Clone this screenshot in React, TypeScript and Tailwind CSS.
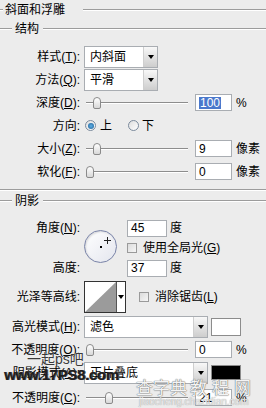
import type { ReactNode } from "react";

function Etched({ className = "" }: { className?: string }) {
  return <div className={`h-[2px] border-t border-[#9c9c9c] bg-white ${className}`} />;
}

function Label({ children }: { children: ReactNode }) {
  return <div className="w-[80px] shrink-0 text-right whitespace-nowrap leading-none">{children}</div>;
}

function Arrow() {
  return <div className="w-0 h-0 border-x-[3px] border-x-transparent border-t-[4px] border-t-black" />;
}

function Select({ value, className }: { value: string; className: string }) {
  return (
    <div className={`ml-[4px] flex h-[22px] border border-[#a9adb2] bg-white ${className}`}>
      <div className="flex-1 pl-[5px] flex items-center leading-none">{value}</div>
      <div className="w-[14px] flex items-center justify-center border-l border-[#cfcfcf] bg-linear-to-b from-[#f8f8f8] to-[#cdcdcd]">
        <Arrow />
      </div>
    </div>
  );
}

function Field({ value, selected, className = "" }: { value: string; selected?: boolean; className?: string }) {
  return (
    <div className={`w-[37px] h-[17px] border border-[#a9adb2] bg-white flex items-center pl-[3px] leading-none text-[12px] ${className}`}>
      {selected ? <span className="bg-[#4a78cc] text-white px-[1px]">{value}</span> : value}
    </div>
  );
}

function Slider({ pos }: { pos: number }) {
  return (
    <div className="relative w-[102px] h-[12px] ml-[6px] flex items-center">
      <div className="w-full h-[2px] border-t border-[#8d8d8d] bg-white" />
      <div
        className="absolute top-0 w-[8px] h-[12px] rounded-t-[4px] rounded-b-[2px] border border-[#8a8a8a] bg-linear-to-b from-white to-[#d8d8d8]"
        style={{ left: pos }}
      />
    </div>
  );
}

function Radio({ checked }: { checked?: boolean }) {
  return (
    <div className="w-[11px] h-[11px] rounded-full border border-[#7b8a9c] bg-linear-to-br from-[#dedede] to-white flex items-center justify-center">
      {checked && <div className="w-[6px] h-[6px] rounded-full bg-radial from-[#5fb0e6] to-[#1d5f96]" />}
    </div>
  );
}

function Check() {
  return <div className="w-[10px] h-[10px] border border-[#9a9a9a] bg-linear-to-br from-[#dcdcdc] to-[#f6f6f6]" />;
}

function SliderRow({ label, value, pos, unit, selected }: { label: ReactNode; value: string; pos: number; unit: string; selected?: boolean }) {
  return (
    <div className="flex items-center h-[23px]">
      <Label>{label}</Label>
      <Slider pos={pos} />
      <Field value={value} selected={selected} className="ml-[7px]" />
      <span className="ml-[4px] leading-none">{unit}</span>
    </div>
  );
}

export default function App() {
  return (
    <div className="relative w-[266px] h-[408px] overflow-hidden bg-[#ececec] text-[12px] text-black font-['Liberation_Sans','Noto_Sans_CJK_SC',sans-serif]">
      {/* 标题 */}
      <div className="flex items-center h-[19px]">
        <Etched className="w-[3px]" />
        <span className="ml-[2px] leading-none">斜面和浮雕</span>
        <Etched className="flex-1 ml-[18px]" />
      </div>

      {/* 结构 */}
      <div className="flex items-center h-[20px]">
        <Etched className="w-[12px]" />
        <span className="ml-[3px] leading-none">结构</span>
        <Etched className="flex-1 ml-[4px]" />
      </div>

      <div className="mt-[6px] flex items-center h-[23px]">
        <Label>样式(<u>T</u>):</Label>
        <Select value="内斜面" className="w-[74px]" />
      </div>
      <div className="flex items-center h-[23px]">
        <Label>方法(<u>Q</u>):</Label>
        <Select value="平滑" className="w-[74px]" />
      </div>
      <SliderRow label={<>深度(<u>D</u>):</>} value="100" pos={7} unit="%" selected />
      <div className="flex items-center h-[23px]">
        <Label>方向:</Label>
        <div className="ml-[5px]"><Radio checked /></div>
        <span className="ml-[4px] leading-none">上</span>
        <div className="ml-[16px]"><Radio /></div>
        <span className="ml-[3px] leading-none">下</span>
      </div>
      <SliderRow label={<>大小(<u>Z</u>):</>} value="9" pos={7} unit="像素" />
      <SliderRow label={<>软化(<u>F</u>):</>} value="0" pos={0} unit="像素" />

      <Etched className="mt-[6px] w-full" />

      {/* 阴影 */}
      <div className="flex items-center h-[20px]">
        <Etched className="w-[12px]" />
        <span className="ml-[3px] leading-none">阴影</span>
        <Etched className="flex-1 ml-[4px]" />
      </div>

      <div className="mt-[7px] flex h-[60px]">
        <div className="flex flex-col justify-between">
          <div className="h-[20px] flex items-center"><Label>角度(<u>N</u>):</Label></div>
          <div className="h-[20px] flex items-center"><Label>高度:</Label></div>
        </div>
        <div className="ml-[4px] mt-[12px] relative w-[33px] h-[33px] rounded-full border-[1.5px] border-[#7a84a8] bg-linear-to-br from-white to-[#e4e6ee] shadow-[inset_1px_1px_2px_rgba(0,0,0,0.15)]">
          <div className="absolute left-[15px] top-[15px] w-[2px] h-[2px] bg-black" />
          <div className="absolute left-[19px] top-[6px] w-[7px] h-[7px]">
            <div className="absolute left-[3px] top-0 w-[1px] h-[7px] bg-[#222]" />
            <div className="absolute left-0 top-[3px] w-[7px] h-[1px] bg-[#222]" />
          </div>
        </div>
        <div className="ml-[10px] flex flex-col justify-between">
          <div className="h-[20px] flex items-center">
            <Field value="45" className="w-[40px]" />
            <span className="ml-[3px] leading-none">度</span>
          </div>
          <div className="flex items-center">
            <Check />
            <span className="ml-[6px] leading-none">使用全局光(<u>G</u>)</span>
          </div>
          <div className="h-[20px] flex items-center">
            <Field value="37" className="w-[40px]" />
            <span className="ml-[3px] leading-none">度</span>
          </div>
        </div>
      </div>

      <div className="mt-[3px] flex items-center h-[32px]">
        <Label>光泽等高线:</Label>
        <div className="ml-[4px] flex h-[32px] border border-[#333] bg-white">
          <svg width="31" height="30" className="block">
            <polygon points="0,30 31,0 31,30" fill="#9b9b9b" />
          </svg>
          <div className="w-[9px] border-l border-[#555] flex justify-center pt-[13px]">
            <Arrow />
          </div>
        </div>
        <div className="ml-[13px]"><Check /></div>
        <span className="ml-[6px] leading-none">消除锯齿(<u>L</u>)</span>
      </div>

      <div className="mt-[2px] flex items-center h-[23px]">
        <Label>高光模式(<u>H</u>):</Label>
        <Select value="滤色" className="w-[124px]" />
        <div className="ml-[3px] w-[30px] h-[18px] border border-[#8c8c8c] bg-white" />
      </div>
      <SliderRow label={<>不透明度(<u>O</u>):</>} value="0" pos={0} unit="%" />
      <div className="flex items-center h-[23px]">
        <Label>阴影模式(<u>A</u>):</Label>
        <Select value="正片叠底" className="w-[124px]" />
        <div className="ml-[3px] w-[30px] h-[15px] border border-[#8c8c8c] bg-black" />
      </div>
      <div className="mt-[2px]">
        <SliderRow label={<>不透明度(<u>C</u>):</>} value="21" pos={19} unit="%" />
      </div>

      {/* 水印 */}
      <div className="absolute left-[27px] top-[352px] text-[14px] leading-none text-[#3a3a3a] [text-shadow:0_0_1px_#fff]">一起ps吧</div>
      <div className="absolute left-[4px] top-[367px] text-[15px] font-bold leading-none tracking-[-0.3px] text-[#1e1e1e] [text-shadow:1px_0_0_#555]">www.17PS8.com</div>
      <div className="absolute left-[136px] top-[380px] text-[17px] leading-none text-[#f4f4f4] [text-shadow:0_0_1px_#666,0_0_1px_#666]">查字典</div>
      <div className="absolute left-[190px] top-[380px] text-[17px] leading-none tracking-[5px] text-[#f4f4f4] [text-shadow:0_0_1px_#666,0_0_1px_#666]">教程网</div>
      <div className="absolute left-[139px] top-[397px] text-[10px] leading-none text-[#e8e8e8] [text-shadow:0_0_1px_#888]">jiaocheng.chazidian.com</div>
    </div>
  );
}
